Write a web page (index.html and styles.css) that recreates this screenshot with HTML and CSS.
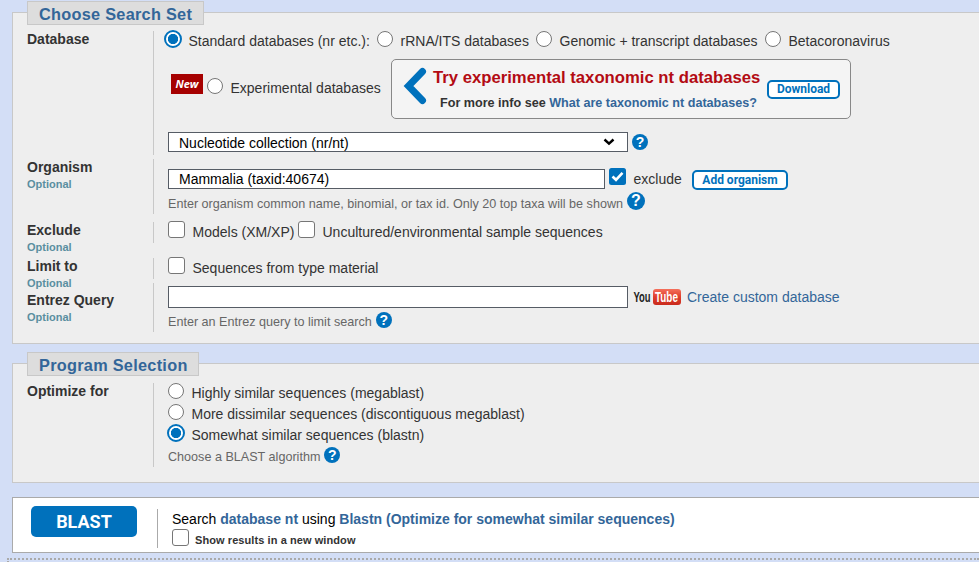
FILE: index.html
```html
<!DOCTYPE html>
<html lang="en">
<head>
<meta charset="utf-8">
<title>BLAST search</title>
<link rel="stylesheet" href="styles.css">
</head>
<body>
<main>
  <section class="panel search-set">
    <h2 class="legend">Choose Search Set</h2>
    <div class="row database">
      <div class="label">Database</div>
      <div class="content">
        <div class="line sources">
          <label class="option std"><i class="radio on"></i><span>Standard databases (nr etc.):</span></label>
          <label class="option rrna"><i class="radio"></i><span>rRNA/ITS databases</span></label>
          <label class="option genomic"><i class="radio"></i><span>Genomic + transcript databases</span></label>
          <label class="option"><i class="radio"></i><span>Betacoronavirus</span></label>
        </div>
        <div class="line experimental">
          <span class="new">New</span>
          <label class="option exp"><i class="radio"></i><span>Experimental databases</span></label>
          <div class="promo">
            <svg class="arrow" width="24" height="38" viewBox="0 0 24 38"><path d="M19.500 4.500 5.500 19l14 14.500" fill="none" stroke="#0071bc" stroke-width="7" stroke-linecap="round"/></svg>
            <div class="promo-text">
              <div class="promo-title">Try experimental taxonomic nt databases</div>
              <div class="promo-info">For more info see <a>What are taxonomic nt databases?</a></div>
            </div>
            <span class="button download">Download</span>
          </div>
        </div>
        <div class="line choose-db">
          <div class="field select"><span>Nucleotide collection (nr/nt)</span><svg width="12" height="8" viewBox="0 0 12 8"><path d="M1.500 1.500 6 5.700l4.500-4.200" fill="none" stroke="#000" stroke-width="2.400"/></svg></div>
          <span class="help">?</span>
        </div>
      </div>
    </div>
    <div class="row organism">
      <div class="label">Organism<small>Optional</small></div>
      <div class="content">
        <div class="line">
          <div class="field taxon"><span>Mammalia (taxid:40674)</span></div>
          <label class="option exclude"><i class="check"><svg width="17" height="17" viewBox="0 0 17 17"><rect width="17" height="17" rx="2.500" fill="#0071bc"/><path d="M3.500 8.500 7 11.800l6.500-7" fill="none" stroke="#fff" stroke-width="2.600"/></svg></i><span>exclude</span></label>
          <span class="button add">Add organism</span>
        </div>
        <div class="hint"><span class="hint-text">Enter organism common name, binomial, or tax id. Only 20 top taxa will be shown</span><span class="help large">?</span></div>
      </div>
    </div>
    <div class="row excludes">
      <div class="label">Exclude<small>Optional</small></div>
      <div class="content">
        <div class="line">
          <label class="option models"><i class="check empty"></i><span>Models (XM/XP)</span></label>
          <label class="option"><i class="check empty"></i><span>Uncultured/environmental sample sequences</span></label>
        </div>
      </div>
    </div>
    <div class="row limit">
      <div class="label">Limit to<small>Optional</small></div>
      <div class="content">
        <div class="line">
          <label class="option"><i class="check empty"></i><span>Sequences from type material</span></label>
        </div>
      </div>
    </div>
    <div class="row entrez">
      <div class="label">Entrez Query<small>Optional</small></div>
      <div class="content">
        <div class="line">
          <div class="field query"></div>
          <svg class="youtube" width="48" height="20" viewBox="0 -1 48 20">
            <defs><linearGradient id="red" x2="0" y2="1"><stop offset="0" stop-color="#f4705c"/><stop offset=".5" stop-color="#df3e2c"/><stop offset="1" stop-color="#c92a1c"/></linearGradient></defs>
            <rect x="20" y="1" width="28" height="16" rx="3" fill="url(#red)"/>
            <text class="yt" transform="translate(.5 14) scale(.63 1)" fill="#222">You</text>
            <text class="yt" transform="translate(22 14) scale(.66 1)" fill="#fff">Tube</text>
          </svg>
          <a class="custom">Create custom database</a>
        </div>
        <div class="hint"><span class="hint-text">Enter an Entrez query to limit search</span><span class="help">?</span></div>
      </div>
    </div>
  </section>

  <section class="panel program">
    <h2 class="legend">Program Selection</h2>
    <div class="row optimize">
      <div class="label">Optimize for</div>
      <div class="content">
        <label class="option"><i class="radio"></i><span>Highly similar sequences (megablast)</span></label>
        <label class="option"><i class="radio"></i><span>More dissimilar sequences (discontiguous megablast)</span></label>
        <label class="option"><i class="radio on"></i><span>Somewhat similar sequences (blastn)</span></label>
        <div class="hint"><span class="hint-text">Choose a BLAST algorithm</span><span class="help">?</span></div>
      </div>
    </div>
  </section>

  <section class="submit">
    <span class="blast">BLAST</span>
    <div class="summary">
      <div class="summary-text">Search <b>database nt</b> using <b>Blastn (Optimize for somewhat similar sequences)</b></div>
      <label class="option window"><i class="check empty"></i><span>Show results in a new window</span></label>
    </div>
  </section>
</main>
<div class="divider"></div>
</body>
</html>
```
FILE: styles.css
```css
* { box-sizing: border-box; }
body {
  margin: 0;
  height: 562px;
  overflow: hidden;
  background: #d3def6;
  color: #333;
  font: 14px/16px "Liberation Sans", Arial, sans-serif;
  white-space: nowrap;
}
main { padding: 12px 0 0 12px; }
.panel {
  border: 1px solid #c8c8c8;
  border-right: 0;
  background: #eee;
  padding-left: 14px;
}
.search-set { height: 332px; }
.program { height: 120px; margin-top: 19px; }
.legend {
  width: 177px;
  height: 24px;
  margin: -12px 0 6px;
  padding-left: 11px;
  border: 1px solid #c8c8c8;
  background: #ddd;
  color: #369;
  font-size: 16.300px;
  line-height: 25px;
  letter-spacing: .28px;
}
.program .legend { width: 172px; margin-bottom: 7px; }
.row { display: flex; }
.label { width: 126px; flex: none; font-weight: bold; color: #333; }
.label small { display: block; margin-top: 1px; font-size: 11px; line-height: 17px; color: #5a8ea0; }
.content { flex: 1; border-left: 1px solid #c8c8c8; padding-left: 14px; }
.database { height: 124px; margin-bottom: 4px; }
.organism { height: 55px; margin-bottom: 8px; }
.excludes { height: 21px; margin-bottom: 15px; }
.limit { height: 21px; margin-bottom: 4px; }
.entrez { height: 49px; }
.entrez .label { padding-top: 9px; }
.optimize { height: 84px; }

.line, .option, .hint { display: flex; align-items: center; }
.option { height: 20px; gap: 7.500px; }
.radio, .check { flex: none; position: relative; top: -2px; }
.check { top: -3px; }
.radio {
  width: 16px;
  height: 16px;
  border: 1px solid #767676;
  border-radius: 50%;
  background: #fff;
}
.radio.on {
  width: 18px;
  height: 18px;
  margin: 0 -1px;
  border: 2px solid #0071bc;
  background: radial-gradient(circle, #0071bc 4.800px, #fff 5.400px);
}
.check { width: 17px; height: 17px; }
.check svg { display: block; }
.check.empty { border: 1px solid #767676; border-radius: 3px; background: #fff; }

.sources { margin-left: -3px; height: 20px; }
.std { width: 212px; }
.rrna { width: 159px; }
.genomic { width: 229px; }
.experimental { height: 60px; margin: 8px 0 13px 3px; }
.new {
  width: 32px;
  height: 20px;
  margin: -11px 4px 0 0;
  background: #a60000;
  color: #fff;
  font: italic bold 11px/19px "Open Sans", sans-serif;
  text-align: center;
}
.exp { width: 184px; margin-top: -3px; }
.promo {
  width: 460px;
  height: 60px;
  display: flex;
  align-items: flex-start;
  border: 1px solid #888;
  border-radius: 5px;
  background: #f4f4f4;
  padding-left: 11px;
}
.arrow { margin-top: 7px; }
.promo-text { width: 340px; padding: 8px 0 0 6px; }
.promo-title { color: #b30b13; font-size: 16.700px; line-height: 20px; font-weight: bold; }
.promo-info { margin: 7px 0 0 7px; font-size: 12.600px; font-weight: bold; }
a { color: #369; }
.button {
  flex: none;
  border: 2px solid #0071bc;
  border-radius: 5px;
  background: #fff;
  color: #0071bc;
  font: bold 12px/16px Roboto, sans-serif;
  text-align: center;
}
.download { width: 73px; height: 19px; line-height: 15px; margin-top: 20px; }
.field {
  flex: none;
  height: 20px;
  width: 460px;
  display: flex;
  align-items: center;
  justify-content: space-between;
  padding: 2px 12px 0 10px;
  background: #fff;
  border: 1px solid #565c65;
  color: #000;
}
.select svg { margin-top: -2px; }
.help {
  flex: none;
  width: 16px;
  height: 16px;
  margin-left: 4px;
  border-radius: 50%;
  background: #0071bc;
  color: #fff;
  font: bold 14px/16px "Liberation Sans", sans-serif;
  text-align: center;
}
.help.large { width: 18px; height: 18px; font-size: 16px; line-height: 18px; }
.organism .line { height: 20px; margin-top: 10px; }
.taxon { width: 437px; padding-top: 0; }
.exclude { margin-left: 4px; width: 83px; }
.add { width: 96px; height: 20px; margin-top: 2px; }
.hint { height: 16px; color: #666; font-size: 12.600px; }
.hint-text { padding-top: 2px; }
.organism .hint { margin-top: 6px; }
.hint .help { margin-top: -3px; }
.hint .large { margin-top: -5px; }
.excludes .line { height: 20px; }
.models { width: 130px; }
.entrez .line { height: 22px; margin-top: 3px; }
.query { height: 22px; }
.youtube { margin-left: 5px; }
.yt { font: bold 15px "Liberation Sans", sans-serif; }
.custom { margin-left: 6px; }
.entrez .hint { margin-top: 5px; }
.optimize .option { height: 21px; position: relative; top: -1px; }
.optimize .hint { margin-top: 2px; }

.submit {
  display: flex;
  height: 56px;
  margin-top: 14px;
  border: 1px solid #aaa;
  border-right: 0;
  background: #fff;
}
.blast {
  width: 106px;
  height: 31px;
  margin: 8px 20px 0 18px;
  border-radius: 5px;
  background: #0071bc;
  color: #fff;
  font: bold 18px/32px Roboto, sans-serif;
  text-align: center;
}
.summary { height: 39px; margin-top: 11px; padding-left: 14px; border-left: 1px solid #aaa; }
.summary-text { color: #000; line-height: 20px; }
.summary b { color: #369; }
.window { gap: 6px; font-size: 11px; font-weight: bold; letter-spacing: .08px; }
.window .check { top: -2px; }
.window span { padding-top: 1px; }
.divider {
  height: 20px;
  margin: 5px 0 0 7px;
  border: 2px dotted #aaa;
  border-right: 0;
}
```
